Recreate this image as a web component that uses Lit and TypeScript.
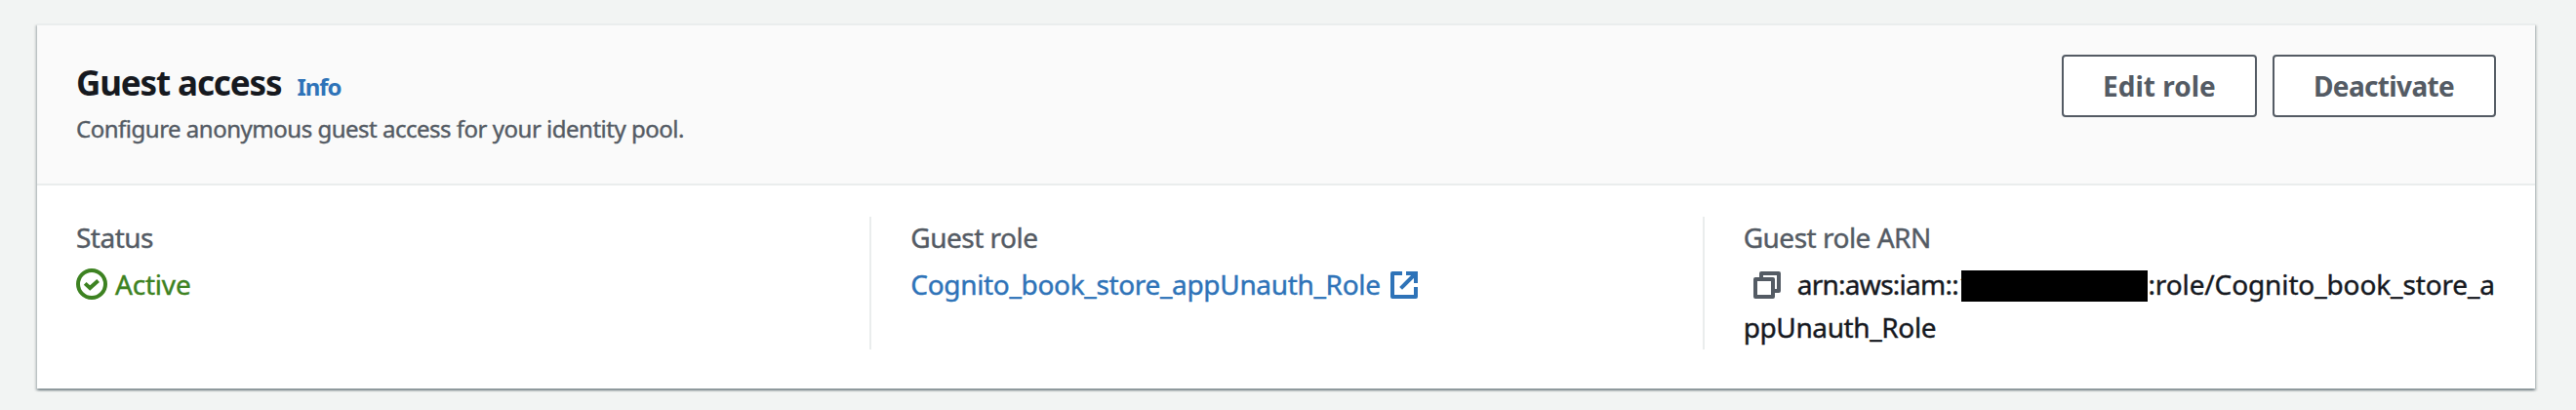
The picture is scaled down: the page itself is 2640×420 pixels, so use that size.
import { css, html, LitElement, svg } from 'lit'

const icons = {
  success: svg`
    <circle cx="16" cy="16" r="14"></circle>
    <path d="M9.2 15.4L14.2 20L22.6 12.4"></path>`,
  external: svg`
    <path d="M12 2H2V26H26V16" stroke-linejoin="round"></path>
    <path d="M16 2H26V12"></path>
    <path d="M26 2L10.6 17.4"></path>`,
  copy: svg`
    <rect x="2" y="8" width="18" height="18" stroke-linejoin="round"></rect>
    <path d="M8 6V2H26V20H22" stroke-linejoin="round"></path>`
}

customElements.define('x-icon', class extends LitElement {
  static properties = {
    name: { type: String },
    size: { type: Number }
  }
  declare name: keyof typeof icons
  declare size: number

  static styles = css`
    :host {
      display: inline-flex;
    }
    .icon {
      fill: none;
      stroke: currentColor;
      stroke-width: 4;
    }
  `
  render() {
    return html`
      <svg class="icon" width=${this.size} height=${this.size} viewBox="0 0 ${this.size} ${this.size}">
        ${icons[this.name]}
      </svg>`
  }
})

customElements.define('x-button', class extends LitElement {
  static styles = css`
    .button {
      display: block;
      box-sizing: border-box;
      height: 64px;
      padding: 0 41px 0 40px;
      border: 2px solid #545b64;
      border-radius: 4px;
      background: #fff;
      color: #545b64;
      font: inherit;
      font-weight: 700;
      font-size: 28px;
      line-height: 58px;
      letter-spacing: inherit;
      width: 100%;
      white-space: nowrap;
    }
  `
  render() {
    return html`<button class="button"><slot></slot></button>`
  }
})

customElements.define('app-root', class extends LitElement {
  static styles = css`
    :host {
      display: block;
      box-sizing: border-box;
      height: 420px;
      padding: 24px 42px 22px 38px;
      background: #f2f4f3;
      color: #16191f;
      font-family: "Noto Sans", "Open Sans", sans-serif;
      font-size: 28px;
      line-height: 44px;
      overflow: hidden;
    }
    .card {
      background: #fff;
      border-top: 2px solid #eaeded;
      box-shadow:
        0 2px 2px 0 rgba(0, 28, 36, 0.3),
        2px 2px 2px 0 rgba(0, 28, 36, 0.15),
        -2px 2px 2px 0 rgba(0, 28, 36, 0.15);
    }
    .header {
      display: flex;
      justify-content: space-between;
      align-items: flex-start;
      box-sizing: border-box;
      height: 164px;
      padding: 30px 40px 0;
      background: #fafafa;
      border-bottom: 2px solid #eaeded;
    }
    .heading {
      padding-top: 7px;
    }
    .title-row {
      display: flex;
      align-items: baseline;
      gap: 16px;
      height: 44px;
      white-space: nowrap;
    }
    .title {
      margin: 0;
      font-size: 35px;
      font-weight: 700;
      line-height: 44px;
      letter-spacing: -1.13px;
    }
    .info {
      color: #2e73b8;
      font-size: 24px;
      font-weight: 700;
      letter-spacing: -1.05px;
      text-decoration: none;
    }
    .description {
      margin: 7px 0 0;
      color: #545b64;
      font-size: 24px;
      line-height: 36px;
      letter-spacing: -0.49px;
      white-space: nowrap;
      -webkit-text-stroke: 0.4px currentColor;
    }
    .actions {
      display: flex;
      gap: 16px;
    }
    .edit {
      width: 200px;
    }
    .deactivate {
      width: 229px;
      letter-spacing: -0.65px;
    }
    .columns {
      display: grid;
      grid-template-columns: repeat(3, 1fr);
      padding: 32px 0 40px;
      -webkit-text-stroke: 0.4px currentColor;
    }
    .column {
      box-sizing: border-box;
      height: 136px;
      padding: 0 40px;
      white-space: nowrap;
    }
    .column + .column {
      border-left: 2px solid #eaeded;
      padding-left: 40px;
    }
    .label {
      margin-bottom: 5px;
      color: #545b64;
      line-height: 42px;
      letter-spacing: -0.5px;
    }
    .status {
      display: flex;
      align-items: center;
      gap: 8px;
      height: 44px;
      color: #3d8221;
      letter-spacing: -0.2px;
    }
    .link {
      display: flex;
      align-items: center;
      gap: 10px;
      height: 44px;
      color: #2e73b8;
      letter-spacing: -0.33px;
      text-decoration: none;
    }
    .link x-icon {
      padding-top: 2px;
    }
    .copy {
      margin: 0 17px 0 10px;
      color: #545b64;
      vertical-align: -4px;
      line-height: 0;
    }
    .prefix {
      letter-spacing: -0.72px;
    }
    .resource {
      letter-spacing: -0.12px;
    }
    .rest {
      letter-spacing: -0.38px;
    }
    /* covers the account number, leaving the edge of its first digit */
    .redacted {
      display: inline-block;
      position: relative;
      width: 191px;
      height: 32px;
      margin-left: -12px;
      background: #000;
      vertical-align: -7px;
    }
  `
  render() {
    return html`
      <section class="card">
        <header class="header">
          <div class="heading">
            <div class="title-row">
              <h2 class="title">Guest access</h2>
              <a class="info">Info</a>
            </div>
            <p class="description">Configure anonymous guest access for your identity pool.</p>
          </div>
          <div class="actions">
            <x-button class="edit">Edit role</x-button>
            <x-button class="deactivate">Deactivate</x-button>
          </div>
        </header>
        <div class="columns">
          <div class="column">
            <div class="label">Status</div>
            <div class="status"><x-icon name="success" size="32"></x-icon>Active</div>
          </div>
          <div class="column">
            <div class="label">Guest role</div>
            <a class="link">Cognito_book_store_appUnauth_Role<x-icon name="external" size="28"></x-icon></a>
          </div>
          <div class="column">
            <div class="label">Guest role ARN</div>
            <div class="arn"><x-icon class="copy" name="copy" size="28"></x-icon><span class="prefix">arn:aws:iam::1</span><span class="redacted"></span><span class="resource">:role/Cognito_book_store_a</span><br><span class="rest">ppUnauth_Role</span></div>
          </div>
        </div>
      </section>`
  }
})
